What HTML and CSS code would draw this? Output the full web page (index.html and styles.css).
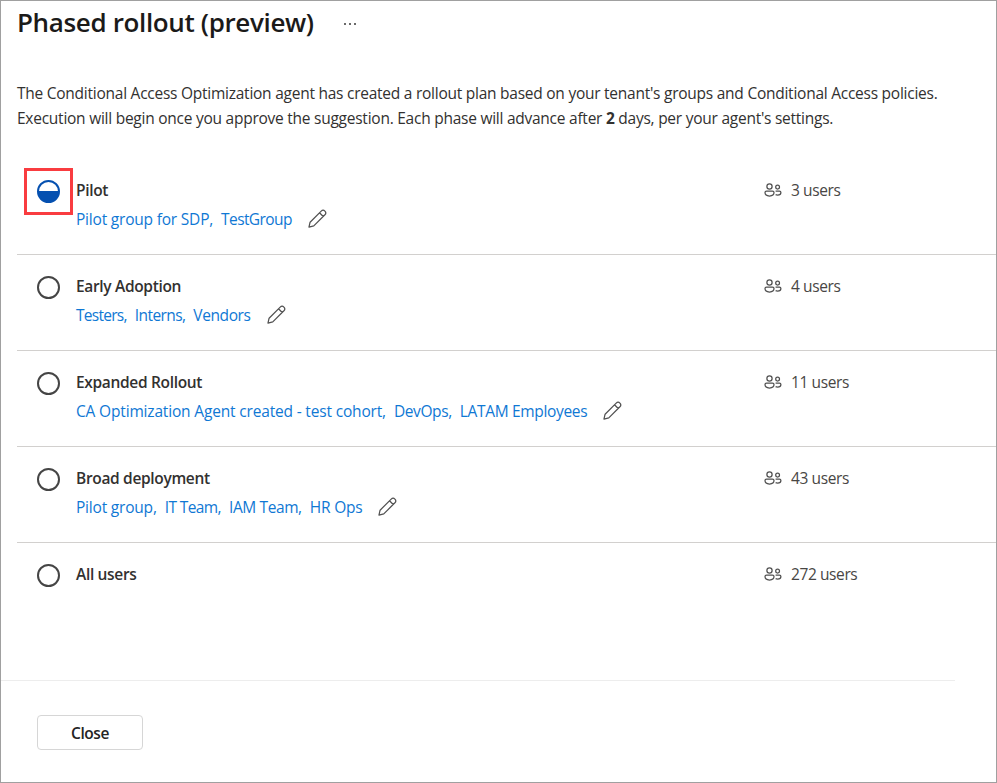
FILE: index.html
```html
<!DOCTYPE html>
<html lang="en">
<head>
<meta charset="utf-8">
<title>Phased rollout (preview)</title>
<link rel="stylesheet" href="styles.css">
</head>
<body>
<svg class="defs" aria-hidden="true">
  <symbol id="pencil" viewBox="0 0 20 20">
    <path d="M1 19 L2.2 13.9 L13.9 2.2 Q15.9 .3 17.8 2.2 Q19.7 4.1 17.8 6.1 L6.1 17.8 Z M12.1 4 L16 7.9"/>
  </symbol>
  <symbol id="people" viewBox="0 0 18 14">
    <circle cx="5.5" cy="3.4" r="2.6"/>
    <circle cx="13.6" cy="4.1" r="1.9"/>
    <path d="M2.5 8.1 H8.5 Q10 8.1 10 9.6 Q10 13 5.5 13 Q1 13 1 9.6 Q1 8.1 2.5 8.1 Z M11.6 8.1 H15.4 Q16.9 8.1 16.9 9.4 Q16.9 12 13.6 12 Q12.4 12 11.6 11.6"/>
  </symbol>
</svg>
<div class="panel">
  <header class="header">
    <h1>Phased rollout (preview)</h1>
    <span class="more"><i></i><i></i><i></i></span>
  </header>
  <p class="intro"><span class="line">The Conditional Access Optimization agent has created a rollout plan based on your tenant's groups and Conditional Access policies.</span><span class="line">Execution will begin once you approve the suggestion. Each phase will advance after <b>2</b> days, per your agent's settings.</span></p>
  <ul class="phases">
    <li class="phase">
      <span class="status active"></span>
      <div class="info"><h2>Pilot</h2>
        <div class="groups"><a class="loose">Pilot group for SDP,</a><a class="tight">TestGroup</a><svg class="edit"><use href="#pencil"/></svg></div></div>
      <div class="count"><svg class="people"><use href="#people"/></svg><span>3 users</span></div>
    </li>
    <li class="phase">
      <span class="status"></span>
      <div class="info"><h2>Early Adoption</h2>
        <div class="groups"><a class="tighter">Testers,</a><a class="tight">Interns,</a><a>Vendors</a><svg class="edit"><use href="#pencil"/></svg></div></div>
      <div class="count"><svg class="people"><use href="#people"/></svg><span>4 users</span></div>
    </li>
    <li class="phase">
      <span class="status"></span>
      <div class="info"><h2>Expanded Rollout</h2>
        <div class="groups"><a class="looser">CA Optimization Agent created - test cohort,</a><a>DevOps,</a><a class="wide">LATAM Employees</a><svg class="edit"><use href="#pencil"/></svg></div></div>
      <div class="count"><svg class="people"><use href="#people"/></svg><span>11 users</span></div>
    </li>
    <li class="phase">
      <span class="status"></span>
      <div class="info"><h2>Broad deployment</h2>
        <div class="groups"><a class="loose">Pilot group,</a><a class="tight">IT Team,</a><a>IAM Team,</a><a class="loose">HR Ops</a><svg class="edit"><use href="#pencil"/></svg></div></div>
      <div class="count"><svg class="people"><use href="#people"/></svg><span>43 users</span></div>
    </li>
    <li class="phase">
      <span class="status"></span>
      <div class="info"><h2>All users</h2></div>
      <div class="count"><svg class="people"><use href="#people"/></svg><span>272 users</span></div>
    </li>
  </ul>
  <footer class="footer"><button class="close">Close</button></footer>
</div>
</body>
</html>
```
FILE: styles.css
```css
*, *::after { box-sizing: border-box; }
body {
  margin: 0;
  background: #fff;
  color: #323130;
  font: 15.5px/25px "Open Sans", "Noto Sans", sans-serif;
  letter-spacing: -0.4px;
}
.defs { position: absolute; width: 0; height: 0; }
.panel {
  display: flex;
  flex-direction: column;
  width: 997px;
  height: 783px;
  border: 1px solid #a0a0a0;
  overflow: hidden;
}
.header { display: flex; align-items: center; height: 44px; padding-left: 16px; }
h1 {
  width: 327px;
  margin: 0;
  color: #1b1a19;
  font-size: 26px;
  font-weight: 600;
  line-height: 42px;
  padding-bottom: 2px;
  letter-spacing: -0.36px;
  white-space: nowrap;
}
.more { display: flex; gap: 3px; padding-top: 2px; }
.more i { width: 2px; height: 2px; background: #6a6a6a; }
.intro { margin: 36px 0 0 16px; letter-spacing: -0.25px; }
.line { display: block; height: 25px; white-space: nowrap; }
.phases { margin: 23px 0 0; padding: 0 0 0 16px; list-style: none; }
.phase {
  display: flex;
  height: 96px;
  padding-top: 19px;
  border-bottom: 1px solid #d2d0ce;
}
.phase:first-child { height: 101px; padding-top: 24px; }
.phase:last-child { border-bottom: 0; }
.status {
  position: relative;
  flex: none;
  width: 23px;
  height: 23px;
  margin: 2px 16px 0 20px;
  border: 2px solid #454545;
  border-radius: 50%;
}
.status.active {
  border-color: #0550b0;
  background: linear-gradient(#fff 50%, #0550b0 50%);
}
.status.active::after {
  content: "";
  position: absolute;
  left: -15px;
  top: -14px;
  width: 49px;
  height: 47px;
  border: 3px solid #f93c40;
}
.info { width: 688px; }
h2 {
  height: 29px;
  margin: 0;
  font-size: 15.5px;
  font-weight: 600;
  line-height: 25px;
  letter-spacing: -0.33px;
}
.groups { display: flex; white-space: nowrap; }
.groups a { margin-right: 8px; color: #0f78d4; }
.groups .loose { letter-spacing: -0.2px; }
.groups .looser { letter-spacing: -0.17px; }
.groups .wide { letter-spacing: -0.33px; }
.groups .tight { letter-spacing: -0.6px; }
.groups .tighter { letter-spacing: -0.72px; }
.edit { width: 19px; height: 19px; margin: 2px 0 0 8px; fill: none; stroke: #505050; stroke-width: 1.3; stroke-linejoin: round; }
.count { display: flex; color: #484644; white-space: nowrap; }
.people { width: 18px; height: 14px; margin: 5px 9px 0 0; fill: none; stroke: #505050; stroke-width: 1.25; }
.footer {
  width: 954px;
  height: 102px;
  margin-top: auto;
  padding: 34px 0 0 36px;
  border-top: 1px solid #ededed;
}
.close {
  width: 106px;
  height: 35px;
  padding: 1px 0 0;
  border: 1px solid #d6d6d6;
  border-radius: 4px;
  background: #fff;
  color: #242424;
  font: 600 15.5px/32px "Open Sans", "Noto Sans", sans-serif;
  letter-spacing: -0.4px;
}
```
